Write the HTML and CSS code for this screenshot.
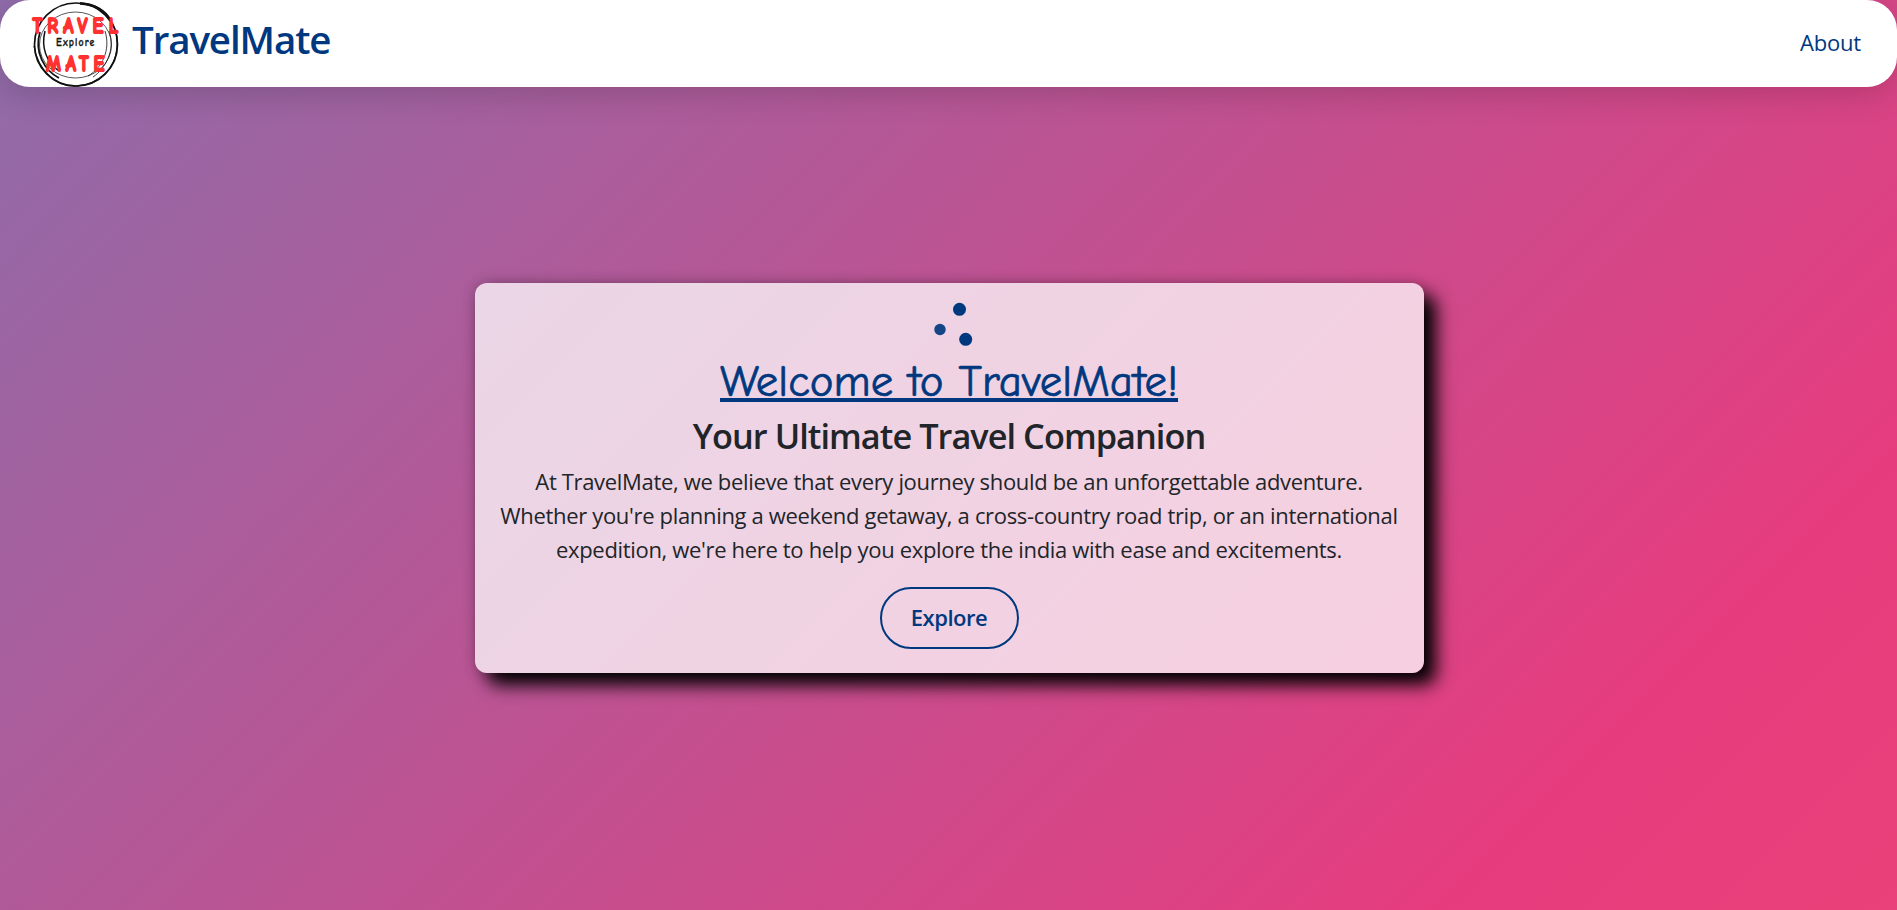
FILE: index.html
```html
<!DOCTYPE html>
<html lang="en">
<head>
<meta charset="utf-8">
<title>TravelMate</title>
<link rel="stylesheet" href="styles.css">
</head>
<body>
<header class="navbar">
  <a class="brand">
    <svg class="logo" viewBox="0 0 90 87" width="90" height="87" role="img" aria-label="Travel Mate Explore">
      <g fill="none" stroke="#111">
        <circle cx="45" cy="44.500" r="41.500" stroke-width="1.700"/>
        <path d="M49 3C75 4 88 26 86 48S67 84 47 86S7 72 3 46" stroke-width="1.300"/>
        <path d="M49 3.500C64 4 75 12 79 20" stroke-width="2.600"/>
        <ellipse cx="44.500" cy="45" rx="36" ry="33" stroke-width=".7"/>
        <path d="M9 32C3 52 13 70 28 78" stroke-width="1.800"/>
        <path d="M14 31C10 47 15 62 28 71" stroke-width="1.500"/>
        <path d="M74 31C80 50 71 68 57 76M78 31C85 50 74 69 62 77" stroke-width=".8"/>
      </g>
      <g class="logo-word">
        <text transform="translate(1.500 32.500) scale(.8 1)" font-size="23" textLength="107">TRAVEL</text>
        <text transform="translate(15 71) scale(.8 1)" font-size="23" textLength="73">MATE</text>
      </g>
      <text class="logo-tag" transform="translate(25 45.500) scale(.85 1)" font-size="11.500" textLength="45">Explore</text>
    </svg>
    <span class="brand-name">TravelMate</span>
  </a>
  <nav><a class="nav-link">About</a></nav>
</header>
<main class="hero">
  <section class="card">
    <svg class="loader" viewBox="0 0 50 56" width="50" height="56" fill="#00387f" aria-hidden="true">
      <circle cx="35.500" cy="17.300" r="6.500"/>
      <circle cx="16" cy="37.500" r="5.700" opacity=".92"/>
      <circle cx="41.700" cy="47.300" r="6.500"/>
    </svg>
    <h1 class="title">Welcome to TravelMate!</h1>
    <h2 class="subtitle">Your Ultimate Travel Companion</h2>
    <p class="lead">At TravelMate, we believe that every journey should be an unforgettable adventure.<br>Whether you're planning a weekend getaway, a cross-country road trip, or an international<br>expedition, we're here to help you explore the india with ease and excitements.</p>
    <a class="button">Explore</a>
  </section>
</main>
</body>
</html>
```

FILE: styles.css
```css
* { box-sizing: border-box; }
body {
  margin: 0;
  height: 910px;
  overflow: hidden;
  display: flex;
  flex-direction: column;
  font-family: "Open Sans", "Noto Sans", sans-serif;
  color: #212529;
  background: linear-gradient(135deg, #8f6ca9 0%, #e73c7e 84.5%, #e94179 100%);
}
.navbar {
  height: 87px;
  flex: none;
  padding: 0 36px 0 31px;
  display: flex;
  align-items: center;
  justify-content: space-between;
  background: #fff;
  border-radius: 30px;
  box-shadow: 0 8px 32px rgba(0, 0, 0, .16);
}
.brand { display: flex; align-items: center; gap: 11px; }
.logo, .loader { display: block; }
.logo-word {
  font-family: "Comic Neue", "Comic Sans MS", Lato, sans-serif;
  font-weight: 700;
  fill: #ff3131;
  stroke: #ff3131;
  stroke-width: 2px;
}
.logo-tag {
  font-family: "Comic Neue", "Comic Sans MS", Lato, sans-serif;
  font-weight: 700;
  fill: #111;
  stroke: #111;
  stroke-width: .3px;
}
.brand-name {
  font-size: 38.5px;
  font-weight: 600;
  line-height: 50px;
  letter-spacing: -1.1px;
  color: #00387f;
  padding-bottom: 10px;
}
.nav-link {
  display: block;
  padding-bottom: 4px;
  color: #00387f;
  font-size: 22px;
  letter-spacing: -.2px;
}
.hero {
  flex: 1;
  padding-top: 196px;
  display: flex;
  justify-content: center;
  align-items: flex-start;
}
.card {
  width: 949px;
  height: 390px;
  margin-left: 1px;
  padding-top: 9px;
  display: flex;
  flex-direction: column;
  align-items: center;
  text-align: center;
  border-radius: 12px;
  background: rgba(255, 255, 255, .75);
  box-shadow: 12px 12px 18px #000, 0 0 14px rgba(0, 0, 0, .22);
}
.title {
  margin: 6px 0 0;
  font-family: "Comic Neue", "Comic Sans MS", Lato, sans-serif;
  font-size: 44.9px;
  line-height: 56px;
  font-weight: 400;
  color: #00387f;
  -webkit-text-stroke: .7px #00387f;
  text-decoration: underline;
  text-decoration-thickness: 4px;
  text-underline-offset: 2px;
  text-decoration-skip-ink: none;
}
.subtitle {
  margin: 5px 0 0;
  font-size: 34.3px;
  font-weight: 600;
  line-height: 42px;
  letter-spacing: -.95px;
}
.lead {
  margin: 7px 0 0;
  font-size: 22px;
  line-height: 34px;
  letter-spacing: -.33px;
  white-space: nowrap;
}
.button {
  margin-top: 21px;
  width: 139px;
  height: 62px;
  padding-bottom: 2px;
  display: flex;
  align-items: center;
  justify-content: center;
  border: 2px solid #00387f;
  border-radius: 31px;
  color: #00387f;
  font-size: 22px;
  font-weight: 600;
  letter-spacing: -.5px;
}
```
